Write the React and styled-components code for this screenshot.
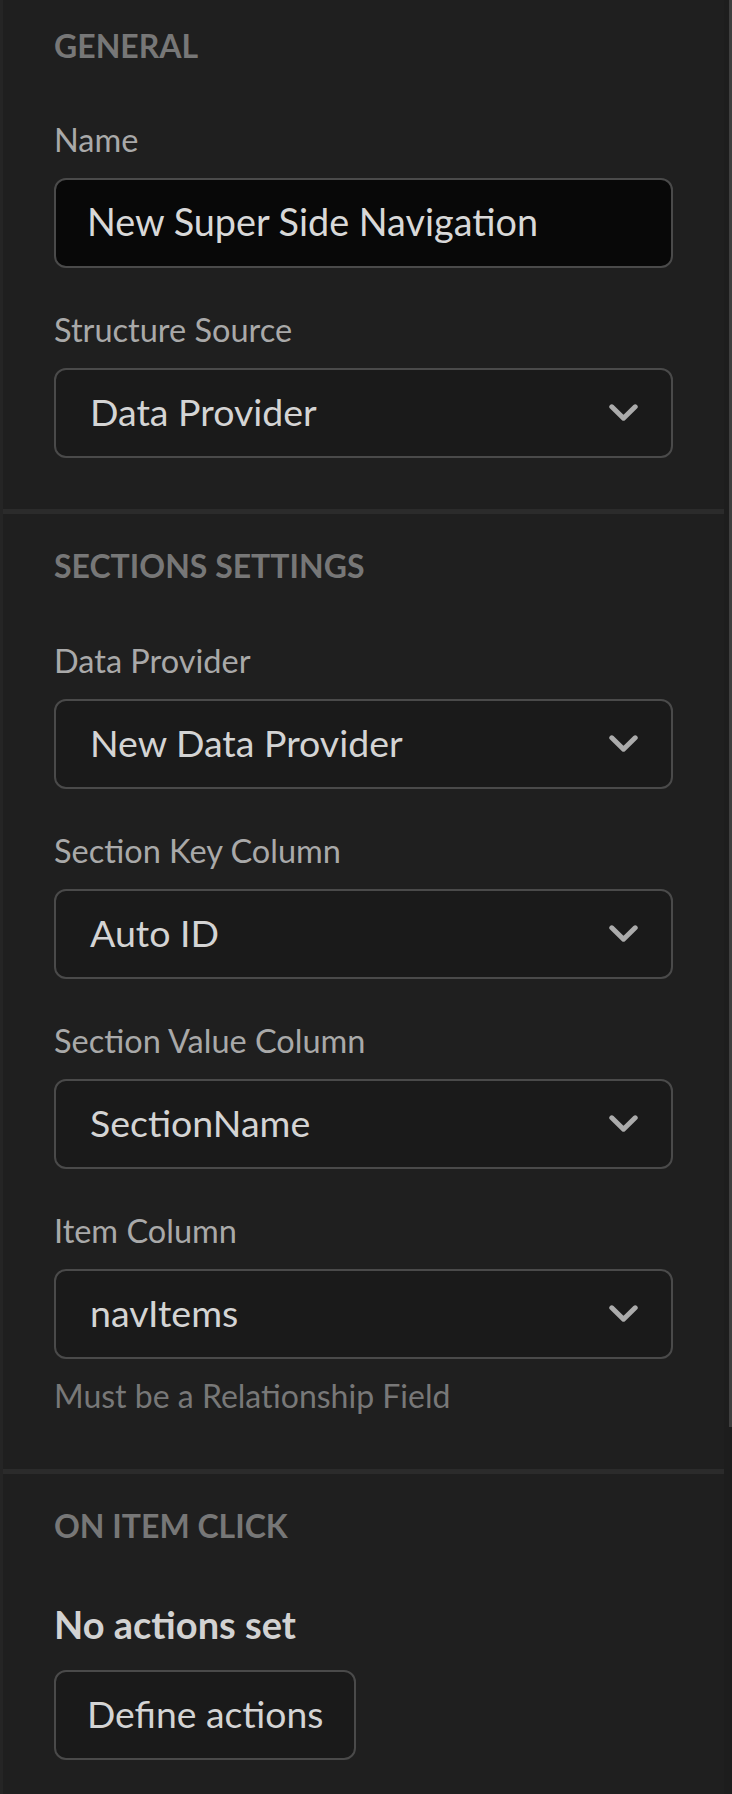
import React from 'react';
import styled, { createGlobalStyle } from 'styled-components';

const GlobalStyle = createGlobalStyle`
  html, body {
    margin: 0;
    padding: 0;
    background: #1f1f1f;
  }
  body {
    font-family: Lato, "Open Sans", sans-serif;
  }
`;

const Panel = styled.div`
  display: flex;
  min-height: 1794px;
  background: #1f1f1f;
  border-left: 3px solid #252525;
`;

const Content = styled.div`
  flex: 1;
  display: flex;
  flex-direction: column;
`;

const ScrollTrack = styled.div`
  width: 8px;
  display: flex;
  justify-content: flex-end;
  align-items: flex-start;
  background: #1d1d1d;
`;

const ScrollThumb = styled.div`
  width: 3px;
  height: 1427px;
  background: #3e3e3e;
`;

const Section = styled.section`
  display: flex;
  flex-direction: column;
  padding: ${(p) => p.$top}px 51px ${(p) => p.$bottom}px;
  & + & {
    border-top: 5px solid #2b2b2b;
  }
`;

const SectionTitle = styled.h2`
  margin: 0 0 ${(p) => p.$gap || 56}px;
  font-size: 32px;
  line-height: 40px;
  font-weight: 700;
  text-transform: uppercase;
  color: #777777;
`;

const Field = styled.div`
  display: flex;
  flex-direction: column;
  & + & {
    margin-top: 43px;
  }
`;

const Label = styled.label`
  font-size: 32.5px;
  line-height: 38px;
  color: #a9a9a9;
  margin-bottom: 19px;
`;

const TextInput = styled.input`
  box-sizing: border-box;
  height: 90px;
  width: 100%;
  padding: 0 31px 3px;
  border: 2px solid #4a4a4a;
  border-radius: 12px;
  background: #080808;
  color: #d8d8d8;
  font-family: inherit;
  font-size: 37.8px;
  outline: none;
`;

const Select = styled.div`
  box-sizing: border-box;
  height: 90px;
  display: flex;
  align-items: center;
  justify-content: space-between;
  padding: 0 33px 3px 34px;
  border: 2px solid #4a4a4a;
  border-radius: 12px;
  background: #1a1a1a;
  color: #d4d4d4;
  font-size: 37.5px;
`;

const Chevron = styled.svg`
  width: 29px;
  height: 18px;
  margin-top: 3px;
  flex-shrink: 0;
`;

const Hint = styled.p`
  margin: 18px 0 0;
  font-size: 32px;
  line-height: 38px;
  color: #787878;
`;

const EmptyTitle = styled.p`
  margin: 0 0 25px;
  font-size: 38px;
  line-height: 42px;
  font-weight: 700;
  color: #d2d2d2;
`;

const ActionButton = styled.button`
  align-self: flex-start;
  box-sizing: border-box;
  height: 90px;
  padding: 0 31px 3px;
  border: 2px solid #4a4a4a;
  border-radius: 12px;
  background: #1a1a1a;
  color: #d4d4d4;
  font-family: inherit;
  font-size: 37.3px;
  cursor: pointer;
`;

const ChevronIcon = () => (
  <Chevron viewBox="0 0 29 18" fill="none">
    <path
      d="M2.8 2.8 L14.5 14.2 L26.2 2.8"
      stroke="#ababab"
      strokeWidth="5"
      strokeLinecap="round"
      strokeLinejoin="round"
    />
  </Chevron>
);

const SelectField = ({ label, value, children }) => (
  <Field>
    <Label>{label}</Label>
    <Select>
      <span>{value}</span>
      <ChevronIcon />
    </Select>
    {children}
  </Field>
);

export default function App() {
  return (
    <>
      <GlobalStyle />
      <Panel>
        <Content>
          <Section $top={26} $bottom={51}>
            <SectionTitle $gap={55}>General</SectionTitle>
            <Field>
              <Label>Name</Label>
              <TextInput readOnly defaultValue="New Super Side Navigation" />
            </Field>
            <SelectField label="Structure Source" value="Data Provider" />
          </Section>

          <Section $top={32} $bottom={54}>
            <SectionTitle>Sections Settings</SectionTitle>
            <SelectField label="Data Provider" value="New Data Provider" />
            <SelectField label="Section Key Column" value="Auto ID" />
            <SelectField label="Section Value Column" value="SectionName" />
            <SelectField label="Item Column" value="navItems">
              <Hint>Must be a Relationship Field</Hint>
            </SelectField>
          </Section>

          <Section $top={32} $bottom={33}>
            <SectionTitle $gap={57}>On Item Click</SectionTitle>
            <EmptyTitle>No actions set</EmptyTitle>
            <ActionButton>Define actions</ActionButton>
          </Section>
        </Content>
        <ScrollTrack>
          <ScrollThumb />
        </ScrollTrack>
      </Panel>
    </>
  );
}
